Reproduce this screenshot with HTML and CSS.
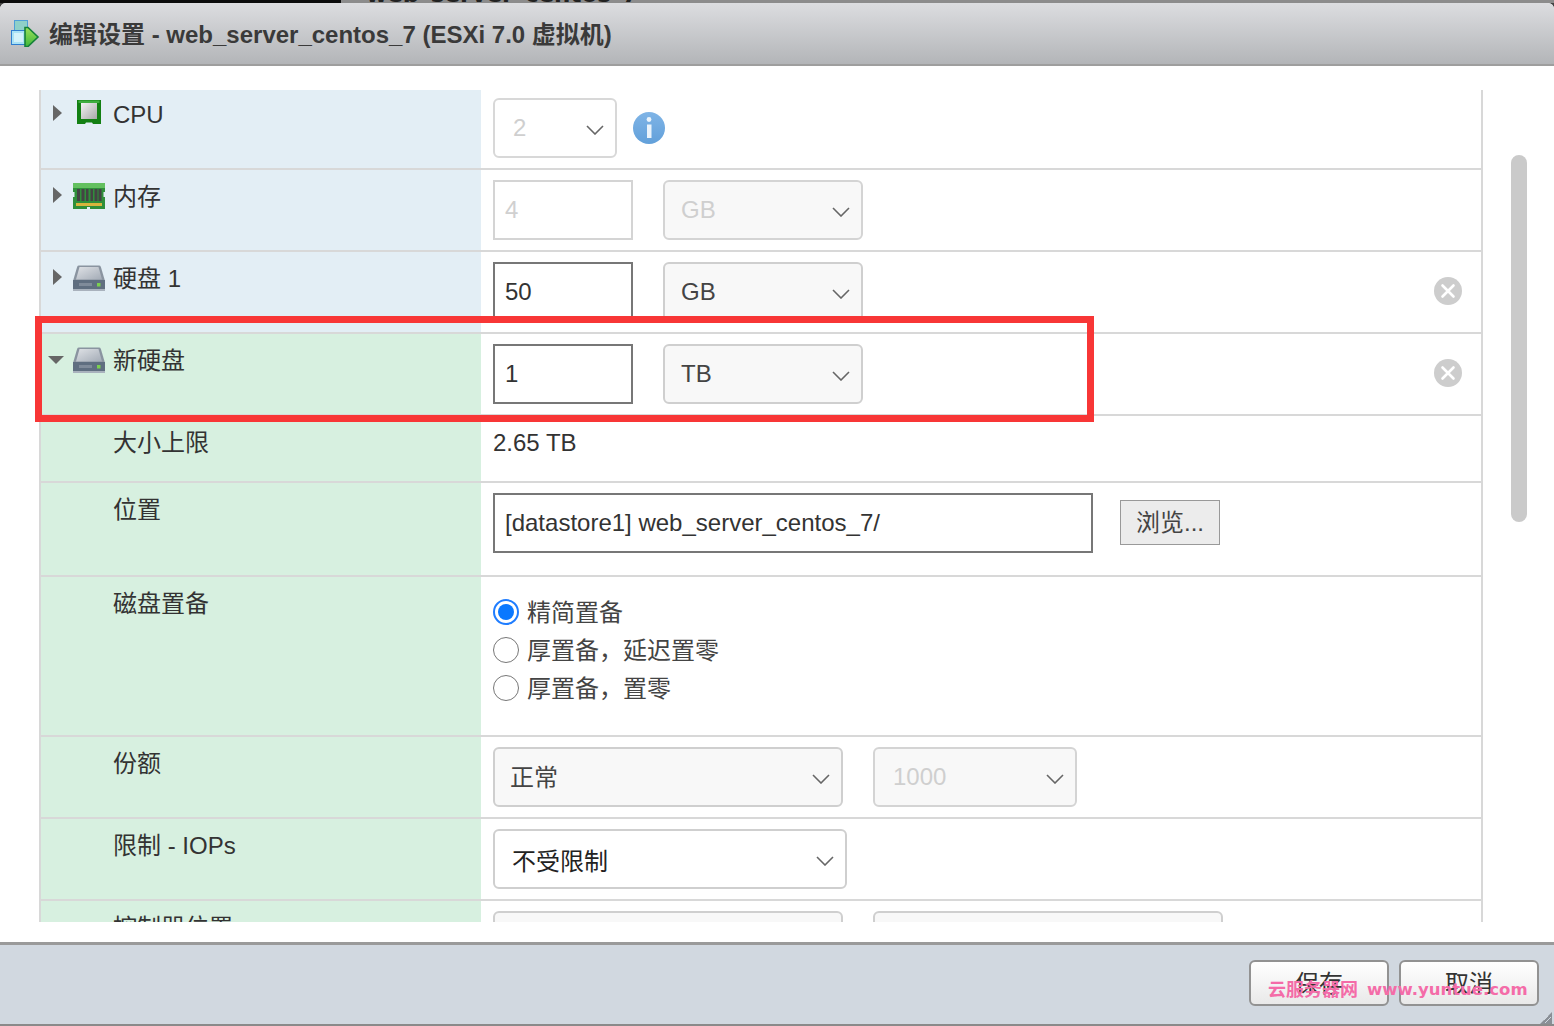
FILE: index.html
```html
<!DOCTYPE html>
<html lang="zh-CN">
<head>
<meta charset="utf-8">
<title>编辑设置</title>
<link rel="stylesheet" href="styles.css">
</head>
<body>
<svg class="defs" width="0" height="0" aria-hidden="true">
  <defs>
    <linearGradient id="diskTop" x1="0" y1="0" x2="1" y2="1"><stop offset="0" stop-color="#dfe2e6"/><stop offset="1" stop-color="#a3abb6"/></linearGradient>
    <linearGradient id="chipIn" x1="0" y1="0" x2="1" y2="1"><stop offset="0" stop-color="#f2f2f2"/><stop offset="1" stop-color="#a8a8a8"/></linearGradient>
    <linearGradient id="infoBg" x1="0" y1="0" x2="0" y2="1"><stop offset="0" stop-color="#7fb4e6"/><stop offset="1" stop-color="#62a0da"/></linearGradient>
    <linearGradient id="arrowFill" x1="0" y1="0" x2="0" y2="1"><stop offset="0" stop-color="#9be05a"/><stop offset="1" stop-color="#3fb83a"/></linearGradient>
    <symbol id="disk" viewBox="0 0 32 26">
      <path d="M6 0.500h20a2 2 0 0 1 1.900 1.400L32 16H0L4.100 1.900A2 2 0 0 1 6 0.500z" fill="#8a94a0"/>
      <path d="M6.500 2h19l3.500 12.500H3z" fill="url(#diskTop)"/>
      <rect x="0" y="15" width="32" height="10" fill="#5f6e80"/>
      <rect x="0" y="24" width="32" height="2" fill="#a9b2bd"/>
      <rect x="6" y="18" width="13" height="3" fill="#7f8b9a"/>
      <rect x="24" y="18" width="3.500" height="3.500" fill="#7bd04f"/>
    </symbol>
    <symbol id="chev" viewBox="0 0 18 10">
      <path d="M1 1l8 8 8-8" fill="none" stroke="#666" stroke-width="1.600"/>
    </symbol>
    <symbol id="del" viewBox="0 0 28 28">
      <circle cx="14" cy="14" r="14" fill="#cdcdcd"/>
      <path d="M8.500 8.500l11 11M19.500 8.500l-11 11" stroke="#fff" stroke-width="2.600" stroke-linecap="round"/>
    </symbol>
  </defs>
</svg>

<div class="backdrop">
  <div class="back-dark"></div>
  <div class="back-title"><span>web_server_centos_7</span></div>
</div>

<main class="dialog">
  <header class="titlebar">
    <svg class="app-icon" viewBox="0 0 30 28" aria-hidden="true">
      <rect x="4.500" y="1.500" width="13" height="13" fill="#8fd0c8" stroke="#4f9fd8"/>
      <rect x="1.500" y="11.500" width="14" height="14" fill="#a9e2f5" stroke="#2f7fd0"/>
      <rect x="4" y="14" width="9" height="9" fill="#d3f2fa"/>
      <path d="M15 8.500h3l10 9.500-10 9.500h-3z" fill="url(#arrowFill)" stroke="#14803a" stroke-width="1.600"/>
    </svg>
    <h1 class="title">编辑设置 - web_server_centos_7 (ESXi 7.0 虚拟机)</h1>
  </header>

  <section class="content">
    <div class="scroller">
      <div class="row row-first">
        <div class="label blue">
          <span class="twisty closed"></span>
          <svg class="chip" viewBox="0 0 24 24" aria-hidden="true">
            <path d="M0 0h24v24h-8l-1-1.500H9L8 24H0z" fill="#138013"/>
            <rect x="1.500" y="0.500" width="21" height="2.500" fill="#3fae3f"/>
            <rect x="4" y="3" width="16" height="16" fill="url(#chipIn)"/>
          </svg>
          <span class="label-text">CPU</span>
        </div>
        <div class="value">
          <div class="select disabled w124">2<svg class="chev"><use href="#chev"/></svg></div>
          <svg class="info" viewBox="0 0 32 32" aria-hidden="true">
            <circle cx="16" cy="16" r="16" fill="url(#infoBg)"/>
            <circle cx="16" cy="7.500" r="2.400" fill="#eaf3fb"/>
            <rect x="14" y="12.500" width="4.500" height="13.500" fill="#eaf3fb"/>
          </svg>
        </div>
      </div>

      <div class="row">
        <div class="label blue">
          <span class="twisty closed"></span>
          <svg class="ram" viewBox="0 0 32 26" aria-hidden="true">
            <rect width="32" height="26" fill="#2f8f3a"/>
            <rect x="0" y="0" width="32" height="5" fill="#63c05f"/>
            <path d="M0 9h1.500v5H0zM30.500 9H32v5h-1.500z" fill="#e3eef5"/>
            <path d="M4 6h3v12H4zM8.500 6h3v12h-3zM13 6h2.500v12H13zM17.500 6h2.500v12h-2.500zM21.500 6h3v12h-3zM25.500 6h3v12h-3z" fill="#444"/>
            <rect x="3" y="20" width="26" height="3" fill="#d8b53c"/>
            <rect x="14" y="24" width="3" height="2" fill="#e3eef5"/>
          </svg>
          <span class="label-text">内存</span>
        </div>
        <div class="value">
          <div class="textbox disabled">4</div>
          <div class="select disabled-soft w200">GB<svg class="chev"><use href="#chev"/></svg></div>
        </div>
      </div>

      <div class="row">
        <div class="label blue">
          <span class="twisty closed"></span>
          <svg class="disk"><use href="#disk"/></svg>
          <span class="label-text">硬盘 1</span>
        </div>
        <div class="value">
          <div class="textbox">50</div>
          <div class="select w200">GB<svg class="chev"><use href="#chev"/></svg></div>
          <svg class="del"><use href="#del"/></svg>
        </div>
      </div>

      <div class="row">
        <div class="label green">
          <span class="twisty open"></span>
          <svg class="disk"><use href="#disk"/></svg>
          <span class="label-text">新硬盘</span>
        </div>
        <div class="value">
          <div class="textbox">1</div>
          <div class="select w200">TB<svg class="chev"><use href="#chev"/></svg></div>
          <svg class="del"><use href="#del"/></svg>
        </div>
      </div>

      <div class="row row-plain">
        <div class="label green sub"><span class="label-text">大小上限</span></div>
        <div class="value value-text">2.65 TB</div>
      </div>

      <div class="row row-loc">
        <div class="label green sub"><span class="label-text">位置</span></div>
        <div class="value">
          <div class="textbox w600">[datastore1] web_server_centos_7/</div>
          <button class="browse" type="button"><span class="up">浏览...</span></button>
        </div>
      </div>

      <div class="row row-radios">
        <div class="label green sub"><span class="label-text">磁盘置备</span></div>
        <div class="value radios">
          <label class="radio"><span class="dot on"></span><span class="up">精简置备</span></label>
          <label class="radio"><span class="dot"></span><span class="up">厚置备，延迟置零</span></label>
          <label class="radio"><span class="dot"></span><span class="up">厚置备，置零</span></label>
        </div>
      </div>

      <div class="row">
        <div class="label green sub"><span class="label-text">份额</span></div>
        <div class="value">
          <div class="select tight w350"><span class="up">正常</span><svg class="chev"><use href="#chev"/></svg></div>
          <div class="select disabled-soft wide w204">1000<svg class="chev"><use href="#chev"/></svg></div>
        </div>
      </div>

      <div class="row">
        <div class="label green sub"><span class="label-text">限制 - IOPs</span></div>
        <div class="value">
          <div class="select white w354"><span>不受限制</span><svg class="chev"><use href="#chev"/></svg></div>
        </div>
      </div>

      <div class="row">
        <div class="label green sub"><span class="label-text">控制器位置</span></div>
        <div class="value">
          <div class="select w350"></div>
          <div class="select w350"></div>
        </div>
      </div>
    </div>

    <div class="scrollbar"></div>
  </section>

  <footer class="footer">
    <button class="btn" type="button"><span class="up">保存</span></button>
    <button class="btn" type="button"><span class="up">取消</span></button>
    <svg class="grip" viewBox="0 0 12 12" aria-hidden="true"><path d="M12 0v12H0z" fill="#8a8f96"/><path d="M8 4l-4 4M11 5l-6 6" stroke="#d1d8e0"/></svg>
  </footer>
</main>

<div class="redbox"></div>
<div class="watermark"><span>云服务器网</span><span class="wm-url">www.yuntue.com</span></div>
</body>
</html>
```
FILE: styles.css
```css
* { box-sizing: border-box; }

html, body {
  margin: 0;
  height: 1026px;
  overflow: hidden;
}

body {
  position: relative;
  background: #444;
  font-family: "Liberation Sans", "Noto Sans CJK SC", sans-serif;
  font-size: 24px;
  color: #333;
}

.defs { position: absolute; }

.up { position: relative; top: -2px; }

.backdrop {
  display: flex;
  height: 3px;
  overflow: hidden;
  background: #8c8c8c;
}
.back-dark { width: 341px; background: #0c0c0c; }
.back-title {
  margin-left: 25px;
  font-family: "DejaVu Sans", sans-serif;
  font-weight: bold;
  font-size: 23px;
  line-height: 3px;
  white-space: nowrap;
  color: #222;
}
.back-title span { position: relative; top: -7px; }

.dialog {
  display: flex;
  flex-direction: column;
  height: 1023px;
  background: #fff;
  border-radius: 6px 6px 0 0;
}

.titlebar {
  display: flex;
  align-items: center;
  height: 63px;
  padding: 0 0 2px 10px;
  background: linear-gradient(#dcdde0, #b3b5b8);
  border-bottom: 2px solid #9e9e9e;
  border-radius: 6px 6px 0 0;
}
.app-icon { width: 30px; height: 28px; margin: 0 9px 0 0; flex: none; }
.title {
  margin: 0;
  font-size: 24px;
  font-weight: bold;
  color: #3a3a3a;
}

.content {
  position: relative;
  flex: 1;
  padding: 24px 0 20px 39px;
  overflow: hidden;
}

.scroller {
  width: 1444px;
  height: 832px;
  overflow: hidden;
  border-left: 2px solid #d8d8d8;
  border-right: 2px solid #d8d8d8;
}

.row {
  display: flex;
  height: 82px;
  border-bottom: 2px solid #d8d8d8;
}
.row-first { height: 80px; }
.row-first .value { padding-top: 8px; }
.row-first .label { padding-top: 8px; }
.row-plain { height: 67px; }
.row-loc { height: 94px; }
.row-radios { height: 160px; }

.label {
  display: flex;
  align-items: flex-start;
  flex: none;
  width: 440px;
  height: 100%;
  padding: 10px 0 0 10px;
}
.blue { background: #e3eef5; }
.green { background: #d7f0e0; }
.sub { padding-left: 72px; }
.label-text { margin-top: 1px; line-height: 32px; white-space: nowrap; }

.twisty {
  width: 0;
  height: 0;
  border-style: solid;
  border-color: transparent;
  flex: none;
}
.twisty.closed {
  margin: 7px 11px 0 2px;
  border-width: 8px 0 8px 9px;
  border-left-color: #666;
}
.twisty.open {
  margin: 12px 9px 0 -3px;
  border-width: 8px 8px 0 8px;
  border-top-color: #666;
}

.chip { width: 24px; height: 24px; margin: 2px 12px 0 4px; flex: none; }
.ram { width: 32px; height: 26px; margin: 3px 8px 0 0; flex: none; }
.disk { width: 32px; height: 26px; margin: 3px 8px 0 0; flex: none; }

.value {
  display: flex;
  align-items: flex-start;
  flex: 1;
  padding: 10px 19px 0 12px;
  height: 100%;
}
.value-text { padding-top: 11px; line-height: 32px; }

.textbox {
  display: flex;
  align-items: center;
  width: 140px;
  height: 60px;
  padding-left: 10px;
  border: 2px solid #777;
  background: #fff;
  color: #333;
  flex: none;
}
.textbox.disabled { border-color: #d4d4d4; color: #d0d0d0; }
.w600 { width: 600px; }

.select {
  display: flex;
  align-items: center;
  justify-content: space-between;
  height: 60px;
  margin-left: 30px;
  padding: 0 11px 0 16px;
  border: 2px solid #cfcfcf;
  border-radius: 6px;
  background: #f8f8f8;
  color: #444;
  flex: none;
}
.value > .select:first-child { margin-left: 0; }
.select.disabled { background: #fff; color: #cfcfcf; border-color: #d8d8d8; padding-left: 18px; }
.select.disabled-soft { color: #cfcfcf; border-color: #d4d4d4; }
.select.white { background: #fff; color: #222; padding-left: 17px; }
.select.tight { padding-left: 15px; }
.select.wide { padding-left: 18px; }
.w124 { width: 124px; }
.w200 { width: 200px; }
.w204 { width: 204px; }
.w350 { width: 350px; }
.w354 { width: 354px; }

.chev { width: 18px; height: 10px; margin-top: 3px; flex: none; }

.info { width: 32px; height: 32px; margin: 14px 0 0 16px; flex: none; }

.del { width: 28px; height: 28px; margin: 15px 0 0 auto; flex: none; }

.browse {
  width: 100px;
  height: 45px;
  margin: 7px 0 0 27px;
  padding: 0;
  border: 1px solid #999;
  background: #ececec;
  font: inherit;
  color: #444;
}

.radios {
  flex-direction: column;
  padding-top: 16px;
}
.radio {
  display: flex;
  align-items: center;
  height: 38px;
  color: #444;
}
.dot {
  position: relative;
  width: 26px;
  height: 26px;
  margin-right: 8px;
  border: 1px solid #777;
  border-radius: 50%;
  background: #fff;
  flex: none;
}
.dot.on { border-color: #1f7dff; border-width: 2px; }
.dot.on::after {
  content: "";
  position: absolute;
  inset: 3px;
  border-radius: 50%;
  background: #0a78ff;
}

.scrollbar {
  position: absolute;
  top: 89px;
  left: 1511px;
  width: 16px;
  height: 367px;
  border-radius: 8px;
  background: #cacaca;
}

.footer {
  position: relative;
  display: flex;
  justify-content: flex-end;
  gap: 10px;
  height: 84px;
  padding: 15px 15px 0 0;
  background: #d1d8e0;
  border-top: 3px solid #9a9a9a;
  border-bottom: 2px solid #8a8a8a;
}
.btn {
  width: 140px;
  height: 46px;
  padding: 0;
  border: 2px solid #929292;
  border-radius: 6px;
  background: linear-gradient(#fff, #e9e9e9);
  font: inherit;
  color: #333;
}
.grip {
  position: absolute;
  right: 2px;
  bottom: 0;
  width: 12px;
  height: 12px;
}

.redbox {
  position: absolute;
  left: 35px;
  top: 316px;
  width: 1059px;
  height: 106px;
  border: 7px solid #f83636;
  pointer-events: none;
}

.watermark {
  position: absolute;
  left: 1268px;
  top: 978px;
  display: flex;
  gap: 9px;
  font-size: 18px;
  font-weight: bold;
  line-height: 24px;
  color: #f46ca8;
  white-space: nowrap;
}
.wm-url { font-family: "DejaVu Sans", sans-serif; font-size: 16.500px; }
```
